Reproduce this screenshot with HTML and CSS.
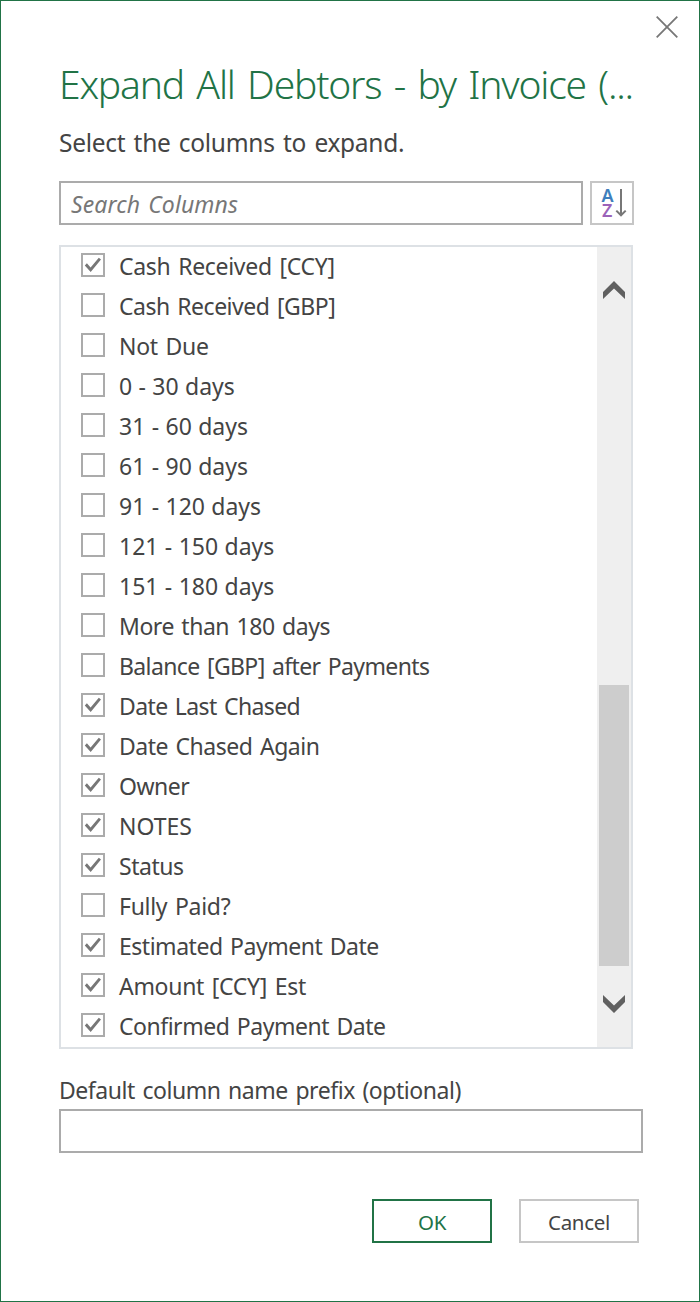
FILE: index.html
```html
<!DOCTYPE html>
<html lang="en">
<head>
<meta charset="utf-8">
<title>Expand columns</title>
<link rel="stylesheet" href="styles.css">
</head>
<body>
<main class="dialog">
  <header class="topbar">
    <svg class="close" viewBox="0 0 22 22"><path d="M.7.7l20.6 20.6M21.3.7L.7 21.3"/></svg>
  </header>
  <h1 class="title"><span>Expand All Debtors - by Invoice (...</span></h1>
  <p class="subtitle"><span>Select the columns to expand.</span></p>
  <div class="search-row">
    <div class="search"><span>Search Columns</span></div>
    <div class="sort">
      <svg class="sort-icon" viewBox="0 0 40 40"><text class="a" x="9.4" y="19">A</text><text class="z" x="10" y="34">Z</text><path class="arrow" d="M29 6v26.5M24.3 27.6l4.7 4.7 4.7-4.7"/></svg>
    </div>
  </div>
  <section class="panel">
    <ul class="list">
      <li class="item on wide"><i class="box"></i><span>Cash Received [CCY]</span></li>
      <li class="item"><i class="box"></i><span>Cash Received [GBP]</span></li>
      <li class="item wide"><i class="box"></i><span>Not Due</span></li>
      <li class="item range"><i class="box"></i><span>0 - 30 days</span></li>
      <li class="item range"><i class="box"></i><span>31 - 60 days</span></li>
      <li class="item range"><i class="box"></i><span>61 - 90 days</span></li>
      <li class="item range"><i class="box"></i><span>91 - 120 days</span></li>
      <li class="item range"><i class="box"></i><span>121 - 150 days</span></li>
      <li class="item range"><i class="box"></i><span>151 - 180 days</span></li>
      <li class="item"><i class="box"></i><span>More than 180 days</span></li>
      <li class="item tight"><i class="box"></i><span>Balance [GBP] after Payments</span></li>
      <li class="item on tight"><i class="box"></i><span>Date Last Chased</span></li>
      <li class="item on"><i class="box"></i><span>Date Chased Again</span></li>
      <li class="item on"><i class="box"></i><span>Owner</span></li>
      <li class="item on range"><i class="box"></i><span>NOTES</span></li>
      <li class="item on"><i class="box"></i><span>Status</span></li>
      <li class="item wide"><i class="box"></i><span>Fully Paid?</span></li>
      <li class="item on"><i class="box"></i><span>Estimated Payment Date</span></li>
      <li class="item on wide"><i class="box"></i><span>Amount [CCY] Est</span></li>
      <li class="item on"><i class="box"></i><span>Confirmed Payment Date</span></li>
    </ul>
    <div class="scrollbar">
      <svg class="chevron" viewBox="0 0 22 18"><path d="M0 11L11 0l11 11v7L11 7.5 0 18z"/></svg>
      <div class="thumb"></div>
      <svg class="chevron" viewBox="0 0 22 18"><path d="M0 7l11 11L22 7V0L11 10.5 0 0z"/></svg>
    </div>
  </section>
  <label class="prefix-label"><span>Default column name prefix (optional)</span></label>
  <div class="prefix"></div>
  <footer class="actions">
    <button class="btn primary"><span>OK</span></button>
    <button class="btn"><span>Cancel</span></button>
  </footer>
</main>
</body>
</html>
```
FILE: styles.css
```css
* { box-sizing: border-box; }
body { margin: 0; background: #fff; color: #444; font-family: "Noto Sans", "Open Sans", sans-serif; }
.dialog { height: 1302px; border: 1px solid #217346; padding: 0 56px 0 58px; display: flex; flex-direction: column; }
.topbar { height: 55px; padding-top: 15px; display: flex; justify-content: flex-end; margin-right: -35px; flex: none; }
.close { width: 22px; height: 22px; fill: none; stroke: #777; stroke-width: 1.8; }
.title { margin: 0; height: 56px; line-height: 56px; font-size: 39px; font-weight: 300; color: #217346; white-space: nowrap; letter-spacing: -1.18px; word-spacing: 3.4px; }
.subtitle { margin: 0; height: 69px; line-height: 62px; font-size: 24.5px; white-space: nowrap; letter-spacing: -.3px; word-spacing: 2.3px; }
.search-row { display: flex; gap: 7px; height: 44px; }
.search { width: 524px; border: 2px solid #ababab; padding-left: 10px; font-size: 23px; line-height: 43px; font-style: italic; color: #777; letter-spacing: .1px; word-spacing: 2px; }
.sort { width: 44px; border: 2px solid #c6c6c6; }
.sort-icon { display: block; width: 40px; height: 40px; font-size: 18px; font-weight: 600; }
.a { fill: #3e7fbd; }
.z { fill: #9b62b8; }
.arrow { fill: none; stroke: #777; stroke-width: 2; }
.panel { margin-top: 20px; width: 574px; height: 804px; border: 2px solid #dde1e5; display: flex; flex: none; }
.list { flex: 1; margin: 0; padding: 0 0 0 20px; list-style: none; }
.item { height: 40px; display: flex; gap: 14px; padding-top: 6px; font-size: 23px; line-height: 27px; white-space: nowrap; letter-spacing: -.48px; word-spacing: 2px; }
.wide { letter-spacing: -.3px; }
.tight { letter-spacing: -.62px; }
.range { letter-spacing: 0; word-spacing: .4px; }
.box { width: 24px; height: 24px; border: 2px solid #ababab; flex: none; }
.on .box::after { content: ""; display: block; width: 20px; height: 20px; background: #777; clip-path: polygon(1.8px 10.6px, 3.9px 8.3px, 7.6px 12.5px, 15.8px 2.8px, 18px 4.5px, 7.7px 17px); }
.scrollbar { width: 34px; background: #efefef; display: flex; flex-direction: column; align-items: center; padding: 34px 0; }
.chevron { width: 22px; height: 18px; fill: #606060; flex: none; }
.thumb { width: 30px; height: 281px; background: #cdcdcd; margin: 386px 0 29px; flex: none; }
.prefix-label { display: block; margin-top: 20px; height: 40px; line-height: 42px; font-size: 23px; white-space: nowrap; letter-spacing: -.45px; word-spacing: 2px; }
.prefix { width: 584px; height: 44px; border: 2px solid #ababab; flex: none; }
.actions { display: flex; justify-content: flex-end; gap: 27px; margin-top: 46px; padding-right: 4px; }
.btn { width: 120px; height: 44px; padding: 2px 0 0; border: 2px solid #c6c6c6; background: #fff; color: #444; font: 20.5px/38px "Noto Sans", "Open Sans", sans-serif; letter-spacing: -.3px; }
.primary { border-color: #217346; color: #217346; }
```
